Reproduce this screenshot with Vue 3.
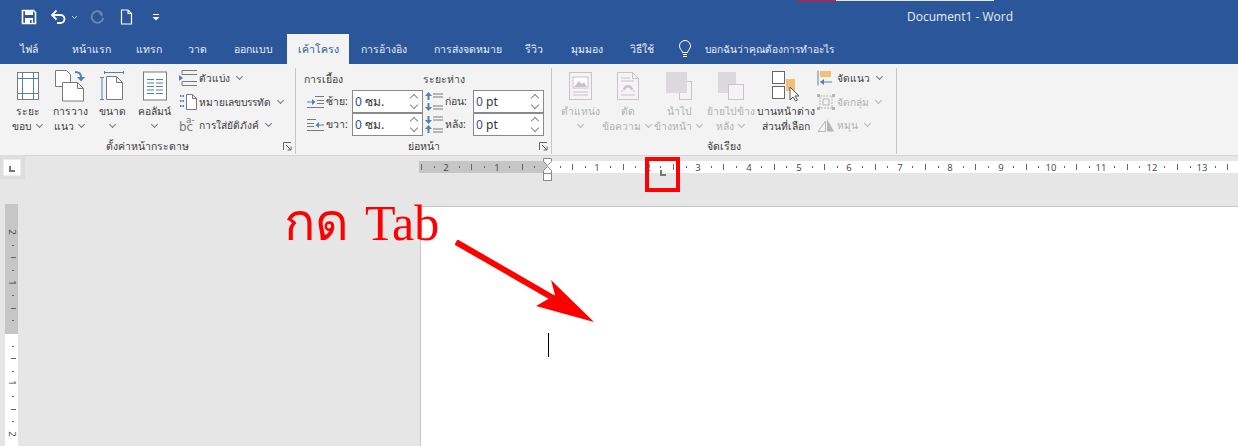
<template>
  <div class="word">
    <div class="titlebar">
      <div class="qat">
        <svg class="qat-save" width="16" height="16" viewBox="0 0 16 16">
          <path d="M1.500 1.500h11l2 2v11h-13z" fill="none" stroke="#fff" stroke-width="1.600" />
          <rect x="4" y="1.500" width="8" height="4.500" fill="#fff" />
          <rect x="4" y="9" width="8" height="5.500" fill="#fff" />
          <rect x="9" y="11" width="1.600" height="3" fill="#2b579a" />
        </svg>
        <svg class="qat-undo" width="17" height="16" viewBox="0 0 17 16">
          <path d="M2 6h8.500a4 4 0 0 1 0 8H7" fill="none" stroke="#fff" stroke-width="1.800" />
          <path d="M6.500 1.500 2 6l4.500 4.500" fill="none" stroke="#fff" stroke-width="1.800" />
        </svg>
        <svg class="qat-chev" width="7" height="5" viewBox="0 0 7 5">
          <path d="M1 1l2.500 2.500L6 1" fill="none" stroke="#c6d3e6" stroke-width="1" />
        </svg>
        <svg class="qat-redo" width="15" height="15" viewBox="0 0 15 15">
          <path d="M11.500 2.800A5.800 5.800 0 1 0 13.200 8" fill="none" stroke="#6b89b8" stroke-width="1.800" />
          <path d="M8 2.500h4.500V7z" fill="#6b89b8" />
        </svg>
        <svg class="qat-new" width="13" height="16" viewBox="0 0 13 16">
          <path d="M1.500 1h6.500l3.500 3.500v10.500h-10z M8 1v3.500h3.500" fill="none" stroke="#fff" stroke-width="1.200" />
        </svg>
        <svg class="qat-more" width="8" height="7" viewBox="0 0 8 7">
          <rect x="1" y="0" width="6" height="1" fill="#fff" />
          <path d="M0.500 3h7L4 6.500z" fill="#fff" />
        </svg>
      </div>
      <div class="title-progress"><span></span></div>
      <div class="doc-title">Document1 - Word</div>
    </div>

    <div class="tabs">
      <div
        v-for="tab in tabs"
        :key="tab.name"
        class="tab"
        :class="{ active: tab.active }"
        :style="{ width: tab.width + 'px' }"
      >
        {{ tab.name }}
      </div>
      <svg class="bulb" width="14" height="18" viewBox="0 0 14 18">
        <path d="M4.500 12.500C4 10 1.500 9 1.500 6a5.500 5.500 0 0 1 11 0c0 3-2.500 4-3 6.500z" fill="none" stroke="#fff" stroke-width="1" />
        <path d="M5 14.500h4M5 16.500h4" stroke="#fff" stroke-width="1" />
      </svg>
      <div class="tell-me">บอกฉันว่าคุณต้องการทำอะไร</div>
    </div>

    <div class="ribbon">
      <div class="group group-page">
        <div class="group-body">
          <div class="big-btn w-margin">
            <svg width="24" height="30" viewBox="0 0 24 30">
              <rect x="1.500" y="1.500" width="21" height="27" fill="#fff" stroke="#7a7a7a" />
              <path d="M6.500 2v26M17.500 2v26M2 7.500h20M2 22.500h20" stroke="#4f81bd" />
            </svg>
            <span class="label">ระยะ</span>
            <span class="label">ขอบ <i class="chev"></i></span>
          </div>
          <div class="big-btn w-orient">
            <svg width="30" height="32" viewBox="0 0 30 32">
              <path d="M.500.500h11l4 4v12h-15z" fill="#fff" stroke="#7a7a7a" />
              <path d="M7.500 12.500h15l6 6v12.500h-21z M22.500 12.500v6h6" fill="#fff" stroke="#7a7a7a" />
              <path d="M20 2c4 0 6 1.500 6 5" fill="none" stroke="#4f81bd" stroke-width="2" />
              <path d="M22 7h8l-4 4.500z" fill="#4f81bd" />
            </svg>
            <span class="label">การวาง</span>
            <span class="label">แนว <i class="chev"></i></span>
          </div>
          <div class="big-btn w-size">
            <svg width="26" height="30" viewBox="0 0 26 30">
              <path d="M5 1.500h19M5.500 0v3M24.500 0v3M1 6.500h4M1 28.500h4M3 6.500v22" fill="none" stroke="#4f81bd" />
              <path d="M7.500 5.500h10l6 6v17h-16z M17.500 5.500v6h6" fill="#fff" stroke="#7a7a7a" />
            </svg>
            <span class="label">ขนาด</span>
            <span class="label"><i class="chev"></i></span>
          </div>
          <div class="big-btn w-cols">
            <svg width="24" height="29" viewBox="0 0 24 29">
              <rect x=".500" y=".500" width="23" height="28" fill="#fff" stroke="#7a7a7a" />
              <path d="M4 8h7M13 8h7M4 11.500h7M13 11.500h7M4 15h7M13 15h7M4 18.500h7M13 18.500h7M4 22h7M13 22h7" stroke="#4f81bd" />
            </svg>
            <span class="label">คอลัมน์</span>
            <span class="label"><i class="chev"></i></span>
          </div>
          <div class="small-list">
            <div class="small-btn">
              <svg width="18" height="16" viewBox="0 0 18 16">
                <path d="M3 .500h15M3 4.500h15M3 11.500h15M3 15.500h15M3 .500v4M3 11.500v4" fill="none" stroke="#7a7a7a" />
                <path d="M0 5l4 3-4 3z" fill="#4f81bd" />
              </svg>
              <span>ตัวแบ่ง</span><i class="chev"></i>
            </div>
            <div class="small-btn">
              <svg width="18" height="16" viewBox="0 0 18 16">
                <path d="M1 2h4M1 7h4M1 12h4" stroke="#4f81bd" stroke-width="2" stroke-dasharray="1.500 1" />
                <path d="M7.500 .500h6l4 4v11h-10z M13.500 .500v4h4" fill="#fff" stroke="#7a7a7a" />
              </svg>
              <span>หมายเลขบรรทัด</span><i class="chev"></i>
            </div>
            <div class="small-btn">
              <svg class="hy-icon" width="18" height="22" viewBox="0 0 18 22">
                <text x="7" y="10" class="hy-top">a-</text>
                <text x="0" y="18" class="hy">bc</text>
              </svg>
              <span>การใส่ยัติภังค์</span><i class="chev"></i>
            </div>
          </div>
        </div>
        <div class="group-label">
          ตั้งค่าหน้ากระดาษ
          <svg class="launcher" width="9" height="9" viewBox="0 0 9 9">
            <path d="M.500 8V.500H8M3 3l5 5M8 4.500V8H4.500" fill="none" stroke="#666" />
          </svg>
        </div>
      </div>

      <div class="group group-para">
        <div class="group-body para-body">
          <div class="para-heads">
            <span class="head-indent">การเยื้อง</span>
            <span>ระยะห่าง</span>
          </div>
          <div class="para-row">
            <svg class="para-icon" width="17" height="12" viewBox="0 0 17 12">
              <path d="M8 .500h9M10 4.500h7M10 7.500h7M0 11.500h17" stroke="#7a7a7a" />
              <path d="M0 5.500h5V3l3.500 3L5 9V6.500H0z" fill="#4f81bd" />
            </svg>
            <span class="para-label">ซ้าย:</span>
            <div class="spin"><b>0</b> ซม.<i class="arrows"></i></div>
            <svg class="para-icon sp" width="18" height="19" viewBox="0 0 18 19">
              <path d="M8 2h10M8 5h10M8 14h10M8 17h10" stroke="#7a7a7a" />
              <path d="M3.500 8V3M3.500 11v5" stroke="#4f81bd" stroke-width="2" />
              <path d="M0 4l3.500-4L7 4zM0 15l3.500 4L7 15z" fill="#4f81bd" />
            </svg>
            <span class="para-label wide">ก่อน:</span>
            <div class="spin"><b>0</b> pt<i class="arrows"></i></div>
          </div>
          <div class="para-row">
            <svg class="para-icon" width="17" height="12" viewBox="0 0 17 12">
              <path d="M0 .500h9M0 4.500h7M0 7.500h7M0 11.500h17" stroke="#7a7a7a" />
              <path d="M17 5.500h-5V3L8.500 6 12 9V6.500h5z" fill="#4f81bd" />
            </svg>
            <span class="para-label">ขวา:</span>
            <div class="spin"><b>0</b> ซม.<i class="arrows"></i></div>
            <svg class="para-icon sp" width="18" height="19" viewBox="0 0 18 19">
              <path d="M8 2h10M8 5h10M8 14h10M8 17h10" stroke="#7a7a7a" />
              <path d="M3.500 1v4M3.500 14v4" stroke="#4f81bd" stroke-width="2" />
              <path d="M0 5l3.500 4L7 5zM0 14l3.500-4L7 14z" fill="#4f81bd" />
            </svg>
            <span class="para-label wide">หลัง:</span>
            <div class="spin"><b>0</b> pt<i class="arrows"></i></div>
          </div>
        </div>
        <div class="group-label">
          ย่อหน้า
          <svg class="launcher" width="9" height="9" viewBox="0 0 9 9">
            <path d="M.500 8V.500H8M3 3l5 5M8 4.500V8H4.500" fill="none" stroke="#666" />
          </svg>
        </div>
      </div>

      <div class="group group-arrange">
        <div class="group-body">
          <div class="big-btn off w-pos">
            <svg width="23" height="28" viewBox="0 0 23 28">
              <rect x=".500" y=".500" width="22" height="27" fill="#f6f3f6" stroke="#c9c2c9" />
              <rect x="4" y="5" width="15" height="11" fill="#fff" stroke="#c9c2c9" />
              <path d="M5 15l5-6 3 3 2-2 3 5z" fill="#c9c2c9" />
              <path d="M4 20h15M4 23h15" stroke="#c9c2c9" />
            </svg>
            <span class="label">ตำแหน่ง</span>
            <span class="label"><i class="chev"></i></span>
          </div>
          <div class="big-btn off w-wrap">
            <svg width="22" height="28" viewBox="0 0 22 28">
              <path d="M.500.500h15l6 6v21H.500z M15.500 .500v6h6" fill="#f6f3f6" stroke="#c9c2c9" />
              <path d="M4 6h9M4 9h13M4 19h2M16 19h2M4 23h14" stroke="#c9c2c9" />
              <path d="M6 18a5 5 0 0 1 10 0h-2.500a2.500 2.500 0 0 0-5 0z" fill="#c9c2c9" />
            </svg>
            <span class="label">ตัด</span>
            <span class="label">ข้อความ <i class="chev"></i></span>
          </div>
          <div class="big-btn off w-front">
            <svg width="26" height="28" viewBox="0 0 26 28">
              <rect x="13.500" y="9.500" width="12" height="18" fill="#f6f3f6" stroke="#c9c2c9" />
              <rect x="0" y="0" width="21" height="21" fill="#ddd8dd" />
            </svg>
            <span class="label">นำไป</span>
            <span class="label">ข้างหน้า <i class="chev"></i></span>
          </div>
          <div class="big-btn off w-back">
            <svg width="26" height="28" viewBox="0 0 26 28">
              <rect x="0" y="0" width="18" height="21" fill="#ddd8dd" />
              <rect x="10.500" y="12.500" width="15" height="15" fill="#f6f3f6" stroke="#c9c2c9" />
            </svg>
            <span class="label">ย้ายไปข้าง</span>
            <span class="label">หลัง <i class="chev"></i></span>
          </div>
          <div class="big-btn w-pane">
            <svg width="28" height="30" viewBox="0 0 28 30">
              <rect x=".500" y=".500" width="12" height="12" fill="#fff" stroke="#666" />
              <rect x="14" y="8" width="9" height="12" fill="#f0c078" />
              <rect x=".500" y="15.500" width="12" height="12" fill="#fff" stroke="#666" />
              <path d="M18 16v13l3-3 2.500 4 2-1-2.500-4h4z" fill="#fff" stroke="#555" />
            </svg>
            <span class="label">บานหน้าต่าง</span>
            <span class="label">ส่วนที่เลือก</span>
          </div>
          <div class="small-list arrange-list">
            <div class="small-btn">
              <svg width="18" height="16" viewBox="0 0 18 16">
                <path d="M1 .500v15" stroke="#7a7a7a" />
                <rect x="3" y="1" width="11" height="6" fill="#f0c078" />
                <path d="M4 12h11" stroke="#4f81bd" />
                <path d="M7 9l-4 3 4 3z" fill="#4f81bd" />
              </svg>
              <span>จัดแนว</span><i class="chev"></i>
            </div>
            <div class="small-btn off">
              <svg width="18" height="16" viewBox="0 0 18 16">
                <path d="M3 2h12v12H3z" fill="none" stroke="#b5b5b5" stroke-dasharray="2 1" />
                <path d="M6 5h6v6H6z" fill="none" stroke="#b5b5b5" />
                <path d="M0 0h3v3H0zM15 0h3v3h-3zM0 13h3v3H0zM15 13h3v3h-3z" fill="#b5b5b5" />
              </svg>
              <span>จัดกลุ่ม</span><i class="chev"></i>
            </div>
            <div class="small-btn off">
              <svg width="18" height="16" viewBox="0 0 18 16">
                <path d="M8.500 4 1 14.500h7.500z" fill="none" stroke="#b5b5b5" />
                <path d="M10 2l7 12.500h-7z" fill="#b5b5b5" />
              </svg>
              <span>หมุน</span><i class="chev"></i>
            </div>
          </div>
        </div>
        <div class="group-label">จัดเรียง</div>
      </div>
    </div>

    <div class="workspace">
      <div class="left-side">
        <div class="tab-corner">
          <div class="tab-select"><i class="tab-stop"></i></div>
        </div>
        <svg class="v-ruler" width="13" height="242" viewBox="0 0 13 242">
          <rect width="13" height="130" fill="#c6c6c6" />
          <rect y="130" width="13" height="112" fill="#fff" />
          <template v-for="m in vMarks" :key="m.y">
            <text
              v-if="m.label"
              class="ruler-num"
              :transform="`translate(4 ${m.y}) rotate(90)`"
              text-anchor="middle"
            >
              {{ m.label }}
            </text>
            <rect v-else :x="m.x" :y="m.y" :width="m.w" height="1" fill="#666" />
          </template>
        </svg>
      </div>
      <div class="right-side">
        <svg class="h-ruler" width="819" height="12" viewBox="0 0 819 12">
          <rect width="128" height="12" fill="#c6c6c6" />
          <rect x="128" width="691" height="12" fill="#fff" />
          <template v-for="m in hMarks" :key="m.x">
            <text v-if="m.label" class="ruler-num" :x="m.x" y="10" text-anchor="middle">{{ m.label }}</text>
            <rect v-else :x="m.x" :y="m.y" :height="m.h" width="1" fill="#666" />
          </template>
        </svg>
        <div class="page">
          <div class="caret"></div>
        </div>
      </div>

      <!-- indent marker, tab stop and the red notes lie over the ruler and page -->
      <svg class="indent" width="10" height="24" viewBox="0 0 10 24">
        <path d="M.500.500h8v3L4.500 7.500.500 3.500z M4.500 8.500l4 4v3h-8v-3z" fill="#fff" stroke="#8a8a8a" />
        <rect x=".500" y="15.500" width="8" height="7" fill="#fff" stroke="#8a8a8a" />
      </svg>
      <i class="tab-stop on-ruler"></i>
      <div class="red-box"></div>
      <div class="note">กด <span>Tab</span></div>
      <svg class="arrow" width="150" height="90" viewBox="0 0 150 90">
        <path d="M1 2 105 62" stroke="#f00" stroke-width="6" />
        <path d="M139 82 96 40 100 55 81 66z" fill="#f00" />
      </svg>
    </div>
  </div>
</template>

<script setup>
const tabs = [
  { name: "ไฟล์", width: 58 },
  { name: "หน้าแรก", width: 66 },
  { name: "แทรก", width: 50 },
  { name: "วาด", width: 46 },
  { name: "ออกแบบ", width: 67 },
  { name: "เค้าโครง", width: 62, active: true },
  { name: "การอ้างอิง", width: 70 },
  { name: "การส่งจดหมาย", width: 98 },
  { name: "รีวิว", width: 34 },
  { name: "มุมมอง", width: 72 },
  { name: "วิธีใช้", width: 38 },
];

const step = 50.4 / 4;

const hMarks = [];
for (let i = -10; i <= 54; i++) {
  const x = Math.round(128 + i * step);
  if (i === 0) continue;
  if (i % 4 === 0) hMarks.push({ x, label: String(Math.abs(i) / 4) });
  else if (i % 2 === 0) hMarks.push({ x, y: 3, h: 6 });
  else hMarks.push({ x, y: 5, h: 2 });
}

const vMarks = [];
for (let i = -8; i <= 9; i++) {
  const y = Math.round(129 + i * step);
  if (i === 0) continue;
  if (i % 4 === 0) vMarks.push({ y, label: String(Math.abs(i) / 4) });
  else if (i % 2 === 0) vMarks.push({ y, x: 6, w: 5 });
  else vMarks.push({ y, x: 7, w: 2 });
}
</script>

<style>
html,
body {
  margin: 0;
  background: #e6e6e6;
}
</style>

<style scoped>
.word {
  width: 1238px;
  height: 446px;
  overflow: hidden;
  background: #e6e6e6;
  font-family: "Noto Sans", "DejaVu Sans", "Liberation Sans", sans-serif;
  font-size: 11px;
  color: #3c3c3c;
}

.titlebar {
  position: relative;
  height: 34px;
  background: #2b579a;
  color: #fff;
}

.qat {
  display: flex;
  align-items: center;
  height: 34px;
  padding-left: 21px;
}

.qat-undo {
  margin-left: 13px;
}

.qat-chev {
  margin-left: 4px;
}

.qat-redo {
  margin-left: 12px;
}

.qat-new {
  margin-left: 15px;
}

.qat-more {
  margin-left: 19px;
}

.title-progress {
  position: absolute;
  left: 797px;
  top: 0;
  width: 197px;
  height: 1px;
  background: #e6e6e6;
}

.title-progress span {
  display: block;
  width: 39px;
  height: 1px;
  background: #e81123;
}

.doc-title {
  position: absolute;
  left: 860px;
  width: 200px;
  top: 8px;
  text-align: center;
  font-family: "Open Sans", sans-serif;
  font-size: 12px;
  color: #e8edf5;
}

.tabs {
  display: flex;
  align-items: stretch;
  height: 30px;
  background: #2b579a;
  color: #e8edf5;
}

.tab {
  display: flex;
  align-items: center;
  justify-content: center;
  font-size: 10.500px;
}

.tab.active {
  background: #f3f3f3;
  color: #2b579a;
}

.bulb {
  align-self: center;
  margin-left: 17px;
}

.tell-me {
  align-self: center;
  margin-left: 13px;
  font-size: 10.200px;
}

.ribbon {
  display: flex;
  height: 91px;
  background: #f3f3f3;
  box-sizing: border-box;
}

.group {
  position: relative;
  display: flex;
  flex-direction: column;
  height: 86px;
  margin-top: 4px;
  border-right: 1px solid #c6c6c6;
  box-sizing: border-box;
}

.group-page {
  width: 296px;
}

.group-para {
  width: 256px;
}

.group-arrange {
  width: 345px;
}

.group-body {
  display: flex;
  height: 70px;
}

.group-label {
  position: relative;
  height: 16px;
  line-height: 16px;
  text-align: center;
  font-size: 10.500px;
}

.launcher {
  position: absolute;
  right: 3px;
  top: 4px;
}

.big-btn {
  display: flex;
  flex-direction: column;
  align-items: center;
  height: 70px;
}

.big-btn svg {
  height: 32px;
  margin-top: 2px;
  margin-bottom: 2px;
  flex: none;
}

.big-btn.off {
  color: #b1b1b1;
}

.label {
  height: 15px;
  line-height: 15px;
  white-space: nowrap;
  font-size: 10.300px;
}

.chev {
  display: inline-block;
  width: 4px;
  height: 4px;
  margin: 0 2px 3px 2px;
  border-right: 1px solid #777;
  border-bottom: 1px solid #777;
  transform: rotate(45deg);
}

.off .chev {
  border-color: #b5b5b5;
}

.w-margin {
  width: 48px;
  margin-left: 4px;
}

.w-orient {
  width: 36px;
}

.w-size {
  width: 48px;
}

.w-cols {
  width: 37px;
}

.small-list {
  display: flex;
  flex-direction: column;
  gap: 5.500px;
  margin-left: 6px;
  padding-top: 1px;
}

.small-btn {
  display: flex;
  align-items: center;
  gap: 2px;
  height: 18px;
  white-space: nowrap;
  font-size: 10.200px;
}

.small-btn .chev {
  margin-left: 5px;
}

.small-btn.off {
  color: #b1b1b1;
}

.hy-icon {
  overflow: visible;
  margin-top: -2px;
}

.hy {
  font-family: "DejaVu Sans", sans-serif;
  font-size: 12px;
  fill: #777;
}

.hy-top {
  font-family: "DejaVu Sans", sans-serif;
  font-size: 9px;
  fill: #777;
}

.para-body {
  flex-direction: column;
  padding-left: 8px;
}

.para-heads {
  display: flex;
  height: 22px;
  align-items: center;
  font-size: 10.500px;
}

.head-indent {
  width: 119px;
}

.para-row {
  display: flex;
  align-items: center;
  height: 23px;
}

.para-icon {
  margin-left: 3px;
  width: 17px;
}

.para-icon.sp {
  width: 18px;
  margin-left: 2px;
}

.para-label {
  width: 26px;
  margin-left: 2px;
  font-size: 10.500px;
  white-space: nowrap;
}

.para-label.wide {
  width: 28px;
}

.spin {
  position: relative;
  width: 71px;
  height: 23px;
  line-height: 21px;
  box-sizing: border-box;
  background: #fff;
  border: 1px solid #8a8a8a;
  padding-left: 2px;
  font-size: 12px;
  color: #333;
}

.spin b {
  font-weight: normal;
  color: #2b4f9a;
}

.arrows::before,
.arrows::after {
  content: "";
  position: absolute;
  right: 5px;
  width: 5px;
  height: 5px;
  border-left: 1px solid #888;
  border-top: 1px solid #888;
  transform: rotate(45deg);
}

.arrows::before {
  top: 4px;
}

.arrows::after {
  top: 11px;
  transform: rotate(225deg);
}

.w-pos {
  width: 47px;
  margin-left: 5px;
}

.w-wrap {
  width: 47px;
}

.w-front {
  width: 56px;
}

.w-back {
  width: 48px;
}

.w-pane {
  width: 62px;
}

.arrange-list {
  margin-left: 0;
}

.workspace {
  position: relative;
  display: flex;
  height: 291px;
  background: #e6e6e6;
  box-shadow: inset 0 1px 0 #d4d4d4;
}

.left-side {
  width: 420px;
  flex: none;
}

.tab-corner {
  width: 25px;
  height: 24px;
  padding: 4px 0 0 3px;
  box-sizing: border-box;
  background: #dedede;
}

.tab-select {
  position: relative;
  width: 18px;
  height: 17px;
  background: #fff;
  border: 1px solid #ececec;
  box-sizing: border-box;
  overflow: hidden;
}

.tab-stop {
  display: block;
  width: 4px;
  height: 4px;
  border-left: 2px solid #777;
  border-bottom: 2px solid #777;
}

.tab-select .tab-stop {
  margin: 6px 0 0 5px;
}

.v-ruler {
  display: block;
  margin: 25px 0 0 5px;
}

.right-side {
  flex: 1;
  padding-top: 6px;
  display: flex;
  flex-direction: column;
}

.h-ruler {
  display: block;
  margin-left: -1px;
}

.ruler-num {
  font-family: "Open Sans", sans-serif;
  font-size: 9.500px;
  fill: #444;
}

.page {
  position: relative;
  flex: 1;
  margin-top: 33px;
  background: #fff;
  border-left: 1px solid #c6c6c6;
  border-top: 1px solid #c6c6c6;
}

.caret {
  position: absolute;
  left: 127px;
  top: 126px;
  width: 1px;
  height: 24px;
  background: #000;
}

.indent {
  position: absolute;
  left: 543px;
  top: 3px;
}

.on-ruler {
  position: absolute;
  left: 660px;
  top: 15px;
}

.red-box {
  position: absolute;
  left: 645px;
  top: 2px;
  width: 35px;
  height: 35px;
  box-sizing: border-box;
  border: 4px solid #f00;
}

.note {
  position: absolute;
  left: 284px;
  top: 40px;
  font-family: "Liberation Serif", serif;
  font-size: 52px;
  line-height: 55px;
  color: #f00;
  white-space: nowrap;
}

.note span {
  margin-left: 3px;
  font-size: 50px;
}

.arrow {
  position: absolute;
  left: 455px;
  top: 85px;
}
</style>
